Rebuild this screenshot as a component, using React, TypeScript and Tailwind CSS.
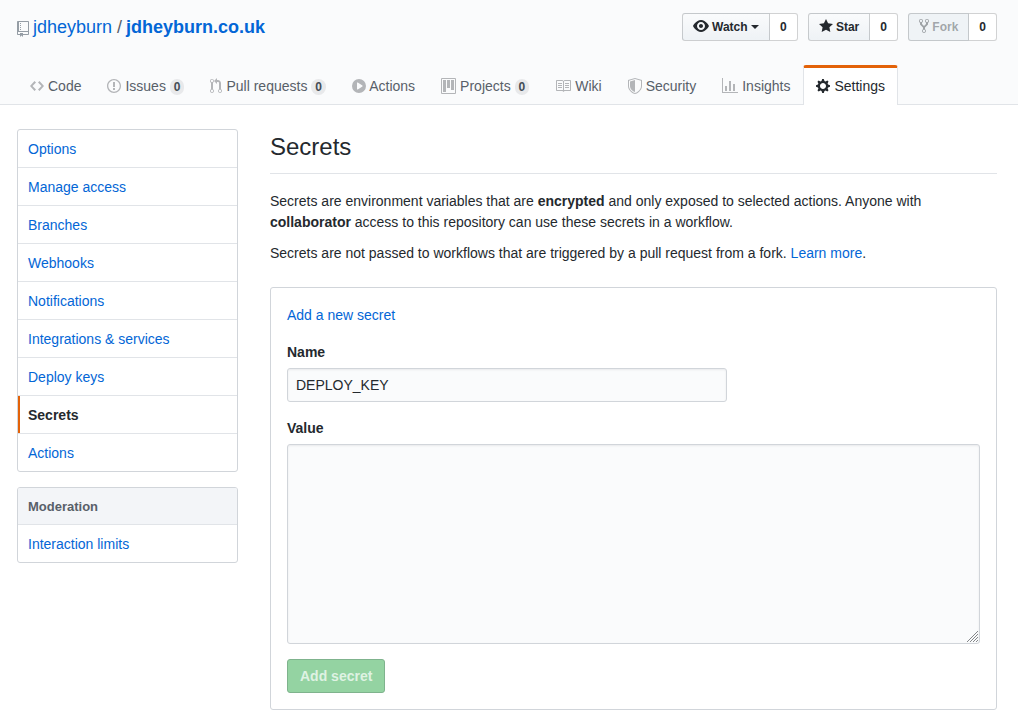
import type { ReactNode } from "react";

const icons = {
  repo: { w: 12, d: "M4 9H3V8h1v1zm0-3H3v1h1V6zm0-2H3v1h1V4zm0-2H3v1h1V2zm8-1v12c0 .55-.45 1-1 1H6v2l-1.5-1.5L3 16v-2H1c-.55 0-1-.45-1-1V1c0-.55.45-1 1-1h10c.55 0 1 .45 1 1zm-1 10H1v2h2v-1h3v1h5v-2zm0-10H2v9h9V1z" },
  eye: { w: 16, d: "M8.06 2C3 2 0 8 0 8s3 6 8.06 6C13 14 16 8 16 8s-3-6-7.94-6zM8 12c-2.2 0-4-1.78-4-4 0-2.2 1.8-4 4-4 2.22 0 4 1.8 4 4 0 2.22-1.78 4-4 4zm2-4c0 1.11-.89 2-2 2-1.11 0-2-.89-2-2 0-1.11.89-2 2-2 1.11 0 2 .89 2 2z" },
  star: { w: 14, d: "M14 6l-4.9-.64L7 1 4.9 5.36 0 6l3.6 3.26L2.67 14 7 11.67 11.33 14l-.93-4.74L14 6z" },
  fork: { w: 10, d: "M8 1a1.993 1.993 0 00-1 3.72V6L5 8 3 6V4.72A1.993 1.993 0 002 1a1.993 1.993 0 00-1 3.72V6.5l3 3v1.78A1.993 1.993 0 005 15a1.993 1.993 0 001-3.72V9.5l3-3V4.72A1.993 1.993 0 008 1zM2 4.2C1.34 4.2.8 3.65.8 3c0-.65.55-1.2 1.2-1.2.65 0 1.2.55 1.2 1.2 0 .65-.55 1.2-1.2 1.2zm3 10c-.66 0-1.2-.55-1.2-1.2 0-.65.55-1.2 1.2-1.2.65 0 1.2.55 1.2 1.2 0 .65-.55 1.2-1.2 1.2zm3-10c-.66 0-1.2-.55-1.2-1.2 0-.65.55-1.2 1.2-1.2.65 0 1.2.55 1.2 1.2 0 .65-.55 1.2-1.2 1.2z" },
  code: { w: 14, d: "M9.5 3L8 4.5 11.5 8 8 11.5 9.5 13 14 8 9.5 3zm-5 0L0 8l4.5 5L6 11.5 2.5 8 6 4.5 4.5 3z" },
  issue: { w: 14, d: "M7 2.3c3.14 0 5.7 2.56 5.7 5.7s-2.56 5.7-5.7 5.7A5.71 5.71 0 011.3 8c0-3.14 2.56-5.7 5.7-5.7zM7 1C3.14 1 0 4.14 0 8s3.14 7 7 7 7-3.14 7-7-3.14-7-7-7zm1 3H6v5h2V4zm0 6H6v2h2v-2z" },
  pull: { w: 12, d: "M11 11.28V5c-.03-.78-.34-1.47-.94-2.06C9.46 2.35 8.78 2.03 8 2H7V0L4 3l3 3V4h1c.27.02.48.11.69.31.21.2.3.42.31.69v6.28A1.993 1.993 0 0010 15a1.993 1.993 0 001-3.72zm-1 2.92c-.66 0-1.2-.55-1.2-1.2 0-.65.55-1.2 1.2-1.2.65 0 1.2.55 1.2 1.2 0 .65-.55 1.2-1.2 1.2zM4 3c0-1.11-.89-2-2-2a1.993 1.993 0 00-1 3.72v6.56A1.993 1.993 0 002 15a1.993 1.993 0 001-3.72V4.72c.59-.34 1-.98 1-1.72zm-.8 10c0 .66-.55 1.2-1.2 1.2-.65 0-1.2-.55-1.2-1.2 0-.65.55-1.2 1.2-1.2.65 0 1.2.55 1.2 1.2zM2 4.2C1.34 4.2.8 3.65.8 3c0-.65.55-1.2 1.2-1.2.65 0 1.2.55 1.2 1.2 0 .65-.55 1.2-1.2 1.2z" },
  play: { w: 14, d: "M14 8A7 7 0 110 8a7 7 0 0114 0zm-8.223 3.482l4.599-3.066a.5.5 0 000-.832L5.777 4.518A.5.5 0 005 4.934v6.132a.5.5 0 00.777.416z" },
  project: { w: 15, d: "M10 12h3V2h-3v10zm-4-2h3V2H6v8zm-4 4h3V2H2v12zm-1 1h13V1H1v14zM14 0H1a1 1 0 00-1 1v14a1 1 0 001 1h13a1 1 0 001-1V1a1 1 0 00-1-1z" },
  book: { w: 16, d: "M3 5h4v1H3V5zm0 3h4V7H3v1zm0 2h4V9H3v1zm11-5h-4v1h4V5zm0 2h-4v1h4V7zm0 2h-4v1h4V9zm2-6v9c0 .55-.45 1-1 1H9.5l-1 1-1-1H2c-.55 0-1-.45-1-1V3c0-.55.45-1 1-1h5.5l1 1 1-1H15c.55 0 1 .45 1 1zm-8 .5L7.5 3H2v9h6V3.5zm7-.5H9.5l-.5.5V12h6V3z" },
  shield: { w: 14, d: "M0 2l7-2 7 2v6.02C14 12.69 8.69 16 7 16c-1.69 0-7-3.31-7-7.98V2zm1 .75L7 1l6 1.75v5.268C13 12.104 8.449 15 7 15c-1.449 0-6-2.896-6-6.982V2.75zm1 .75L7 2v12c-1.207 0-5-2.482-5-5.985V3.5z" },
  graph: { w: 16, d: "M16 14v1H0V0h1v14h15zM5 13H3V8h2v5zm4 0H7V3h2v10zm4 0h-2V6h2v7z" },
  gear: { w: 14, d: "M14 8.77v-1.6l-1.94-.64-.45-1.09.88-1.84-1.13-1.13-1.81.91-1.09-.45-.69-1.92h-1.6l-.63 1.94-1.11.45-1.84-.88-1.13 1.13.91 1.81-.45 1.09L0 7.23v1.59l1.94.64.45 1.09-.88 1.84 1.13 1.13 1.81-.91 1.09.45.69 1.92h1.59l.63-1.94 1.11-.45 1.84.88 1.13-1.13-.92-1.81.47-1.09L14 8.75v.02zM7 11c-1.66 0-3-1.34-3-3s1.34-3 3-3 3 1.34 3 3-1.34 3-3 3z" },
};

type IconName = keyof typeof icons;

function Icon({ name, className = "" }: { name: IconName; className?: string }) {
  const { w, d } = icons[name];
  return (
    <svg
      width={w}
      height={16}
      viewBox={`0 0 ${w} 16`}
      fill="currentColor"
      fillRule="evenodd"
      className={`inline-block align-text-bottom ${className}`}
      aria-hidden="true"
    >
      <path d={d} />
    </svg>
  );
}

function SocialButton({ icon, children, disabled = false }: { icon: IconName; children: ReactNode; disabled?: boolean }) {
  return (
    <li className="flex text-xs leading-5 font-bold">
      <button
        disabled={disabled}
        className={`rounded-l-[3px] border px-2.5 py-[3px] whitespace-nowrap ${
          disabled
            ? "border-[#1b1f23]/20 bg-[#eff3f6] text-[#24292e]/40"
            : "border-[#1b1f23]/20 bg-linear-to-b from-[#fafbfc] to-[#eff3f6] to-90% text-[#24292e]"
        }`}
      >
        <Icon name={icon} /> {children}
      </button>
      <a className="rounded-r-[3px] border border-l-0 border-[#1b1f23]/20 bg-white px-2.5 py-[3px] text-[#24292e]">0</a>
    </li>
  );
}

function ResizeGrip() {
  return (
    <svg width={11} height={11} viewBox="0 0 11 11" className="pointer-events-none absolute right-[2px] bottom-[2px]" shapeRendering="crispEdges" aria-hidden="true">
      {[10, 7, 4, 1].map((n) =>
        Array.from({ length: n + 1 }, (_, i) => (
          <rect key={`${n}-${i}`} x={10 - n + i} y={10 - i} width={1} height={1} fill="#85878a" />
        )),
      )}
    </svg>
  );
}

const tabs: { icon: IconName; label: string; count?: number; active?: boolean }[] = [
  { icon: "code", label: "Code" },
  { icon: "issue", label: "Issues", count: 0 },
  { icon: "pull", label: "Pull requests", count: 0 },
  { icon: "play", label: "Actions" },
  { icon: "project", label: "Projects", count: 0 },
  { icon: "book", label: "Wiki" },
  { icon: "shield", label: "Security" },
  { icon: "graph", label: "Insights" },
  { icon: "gear", label: "Settings", active: true },
];

const menu = ["Options", "Manage access", "Branches", "Webhooks", "Notifications", "Integrations & services", "Deploy keys", "Secrets", "Actions"];

export default function App() {
  return (
    <div className="min-h-[721px] bg-white font-['Liberation_Sans',Arial,sans-serif] text-sm leading-[21px] text-[#24292e]">
      <header className="flex h-[105px] flex-col justify-between border-b border-[#e1e4e8] bg-[#fafbfc] pt-[13px] pr-[21px] pl-[17px]">
        <div className="flex items-start justify-between">
          <h1 className="flex text-lg leading-7 whitespace-pre">
            <Icon name="repo" className="mt-2 mr-1 text-[#959da5]" />
            <a className="text-[#0366d6]">jdheyburn</a>
            <span className="-mr-px text-[#586069]"> / </span>
            <a className="font-bold text-[#0366d6]">jdheyburn.co.uk</a>
          </h1>
          <ul className="flex gap-2.5">
            <SocialButton icon="eye">
              Watch <span className="mb-0.5 inline-block border-x-4 border-t-4 border-x-transparent border-t-current align-middle" />
            </SocialButton>
            <SocialButton icon="star">Star</SocialButton>
            <SocialButton icon="fork" disabled>Fork</SocialButton>
          </ul>
        </div>
        <nav className="-mb-px flex">
          {tabs.map((t) => (
            <a
              key={t.label}
              className={`rounded-t-[3px] border border-t-[3px] border-b-0 px-3 pt-[7px] pb-2 leading-[22px] whitespace-nowrap ${
                t.active
                  ? "border-[#e1e4e8] border-t-[#e36209] bg-white text-[#24292e]"
                  : "border-transparent text-[#586069]"
              }`}
            >
              <Icon name={t.icon} className={t.active ? "mr-[0.1px]" : "mr-[0.1px] text-[#b3b5b8]"} /> {t.label}
              {t.count !== undefined && (
                <>
                  {" "}
                  <span className="inline-block rounded-[20px] bg-[#1b1f23]/8 px-1 py-0.5 text-xs leading-3 font-bold text-[#444d56]">{t.count}</span>
                </>
              )}
            </a>
          ))}
        </nav>
      </header>

      <div className="flex gap-8 pt-6 pr-[21px] pl-[17px]">
        <aside className="flex w-[221px] shrink-0 flex-col gap-[15px]">
          <nav className="overflow-hidden rounded-[3px] border border-[#d1d5da]">
            {menu.map((m) => (
              <a
                key={m}
                className={`block border-b border-[#e1e4e8] px-2.5 pt-[9px] pb-[7px] last:border-b-0 ${
                  m === "Secrets"
                    ? "bg-[linear-gradient(#e36209,#e36209)] bg-[length:2px_100%] bg-no-repeat font-bold text-[#24292e]"
                    : "text-[#0366d6]"
                }`}
              >
                {m}
              </a>
            ))}
          </nav>
          <nav className="overflow-hidden rounded-[3px] border border-[#d1d5da]">
            <h3 className="border-b border-[#e1e4e8] bg-[#f3f5f8] px-2.5 pt-[9px] pb-[7px] text-[13px] leading-5 font-bold text-[#586069]">Moderation</h3>
            <a className="block px-2.5 pt-[9px] pb-[7px] text-[#0366d6]">Interaction limits</a>
          </nav>
        </aside>

        <main className="min-w-0 flex-1">
          <h2 className="mb-[17px] border-b border-[#e1e4e8] pb-2 text-2xl leading-9">Secrets</h2>
          <p className="mb-2.5">
            Secrets are environment variables that are <strong>encrypted</strong> and only exposed to selected actions. Anyone with{" "}
            <strong>collaborator</strong> access to this repository can use these secrets in a workflow.
          </p>
          <p className="mb-[23px]">
            Secrets are not passed to workflows that are triggered by a pull request from a fork. <a className="text-[#0366d6]">Learn more</a>.
          </p>
          <form className="flex h-[423px] flex-col items-start rounded-[3px] border border-[#d1d5da] px-4 pt-[17px]">
            <a className="text-[#0366d6]">Add a new secret</a>
            <label htmlFor="name" className="mt-4 mb-[5px] font-bold">Name</label>
            <input
              id="name"
              defaultValue="DEPLOY_KEY"
              className="h-[34px] w-[440px] rounded-[3px] border border-[#d1d5da] bg-[#fafbfc] px-2 text-sm shadow-[inset_0_1px_2px_rgba(27,31,35,0.075)] outline-none"
            />
            <label htmlFor="value" className="mt-4 mb-[5px] font-bold">Value</label>
            <div className="relative w-full">
              <textarea
                id="value"
                className="block h-[200px] w-full resize-none rounded-[3px] border border-[#d1d5da] bg-[#fafbfc] px-2 py-1.5 shadow-[inset_0_1px_2px_rgba(27,31,35,0.075)] outline-none"
              />
              <ResizeGrip />
            </div>
            <button
              type="button"
              disabled
              className="mt-[15px] h-[34px] rounded-[3px] border border-[#7fb38d] bg-[#94d3a2] px-3 leading-5 font-bold text-[#dff2e3]"
            >
              Add secret
            </button>
          </form>
        </main>
      </div>
    </div>
  );
}
